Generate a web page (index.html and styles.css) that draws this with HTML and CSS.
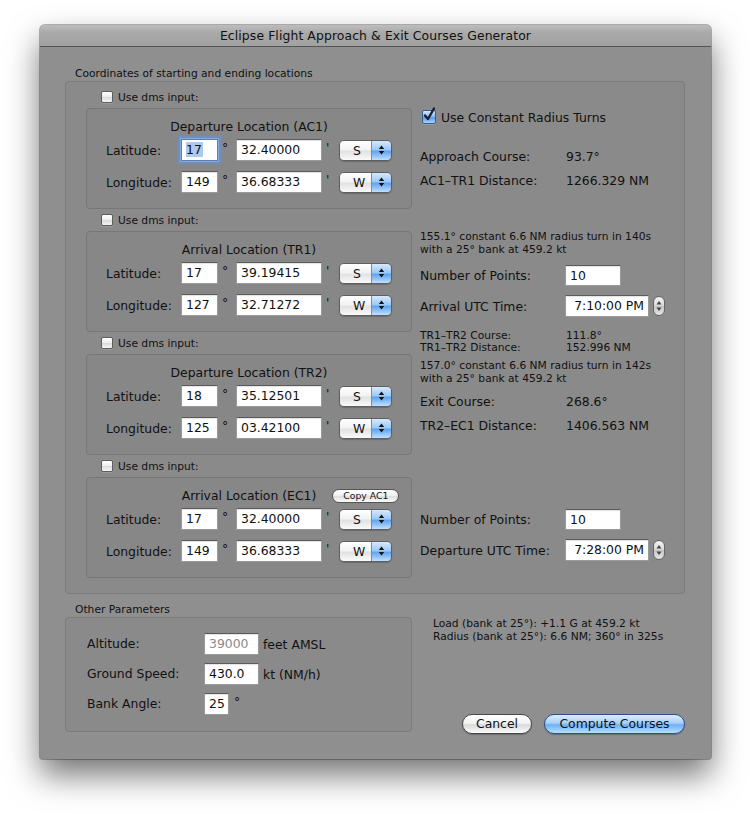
FILE: index.html
```html
<!DOCTYPE html>
<html lang="en">
<head>
<meta charset="utf-8">
<title>Eclipse Flight Approach &amp; Exit Courses Generator</title>
<link rel="stylesheet" href="styles.css">
</head>
<body>
<div class="window">
  <div class="titlebar">Eclipse Flight Approach &amp; Exit Courses Generator</div>
  <div class="content">
    <div class="group-label">Coordinates of starting and ending locations</div>
    <div class="groupbox coords">
      <div class="left-col">
        <div class="loc">
          <div class="dms"><span class="cb"></span><span>Use dms input:</span></div>
          <div class="locbox">
            <div class="loc-title"><span class="lt">Departure Location (AC1)</span></div>
            <div class="coord-row lat">
              <span class="lbl">Latitude:</span>
              <span class="field focus"><span class="sel">17</span></span>
              <span class="unit">°</span>
              <span class="field">32.40000</span>
              <span class="unit">'</span>
              <span class="popup"><span class="pv">S</span><span class="parr"><svg width="7" height="12" viewBox="0 0 7 12"><path d="M3.5 1.5L6.2 5H0.8Z M3.5 10.5L6.2 7H0.8Z" fill="#111"/></svg></span></span>
            </div>
            <div class="coord-row lon">
              <span class="lbl">Longitude:</span>
              <span class="field">149</span>
              <span class="unit">°</span>
              <span class="field">36.68333</span>
              <span class="unit">'</span>
              <span class="popup"><span class="pv">W</span><span class="parr"><svg width="7" height="12" viewBox="0 0 7 12"><path d="M3.5 1.5L6.2 5H0.8Z M3.5 10.5L6.2 7H0.8Z" fill="#111"/></svg></span></span>
            </div>
          </div>
        </div>
        <div class="loc">
          <div class="dms"><span class="cb"></span><span>Use dms input:</span></div>
          <div class="locbox">
            <div class="loc-title"><span class="lt">Arrival Location (TR1)</span></div>
            <div class="coord-row lat">
              <span class="lbl">Latitude:</span>
              <span class="field">17</span>
              <span class="unit">°</span>
              <span class="field">39.19415</span>
              <span class="unit">'</span>
              <span class="popup"><span class="pv">S</span><span class="parr"><svg width="7" height="12" viewBox="0 0 7 12"><path d="M3.5 1.5L6.2 5H0.8Z M3.5 10.5L6.2 7H0.8Z" fill="#111"/></svg></span></span>
            </div>
            <div class="coord-row lon">
              <span class="lbl">Longitude:</span>
              <span class="field">127</span>
              <span class="unit">°</span>
              <span class="field">32.71272</span>
              <span class="unit">'</span>
              <span class="popup"><span class="pv">W</span><span class="parr"><svg width="7" height="12" viewBox="0 0 7 12"><path d="M3.5 1.5L6.2 5H0.8Z M3.5 10.5L6.2 7H0.8Z" fill="#111"/></svg></span></span>
            </div>
          </div>
        </div>
        <div class="loc">
          <div class="dms"><span class="cb"></span><span>Use dms input:</span></div>
          <div class="locbox">
            <div class="loc-title"><span class="lt">Departure Location (TR2)</span></div>
            <div class="coord-row lat">
              <span class="lbl">Latitude:</span>
              <span class="field">18</span>
              <span class="unit">°</span>
              <span class="field">35.12501</span>
              <span class="unit">'</span>
              <span class="popup"><span class="pv">S</span><span class="parr"><svg width="7" height="12" viewBox="0 0 7 12"><path d="M3.5 1.5L6.2 5H0.8Z M3.5 10.5L6.2 7H0.8Z" fill="#111"/></svg></span></span>
            </div>
            <div class="coord-row lon">
              <span class="lbl">Longitude:</span>
              <span class="field">125</span>
              <span class="unit">°</span>
              <span class="field">03.42100</span>
              <span class="unit">'</span>
              <span class="popup"><span class="pv">W</span><span class="parr"><svg width="7" height="12" viewBox="0 0 7 12"><path d="M3.5 1.5L6.2 5H0.8Z M3.5 10.5L6.2 7H0.8Z" fill="#111"/></svg></span></span>
            </div>
          </div>
        </div>
        <div class="loc">
          <div class="dms"><span class="cb"></span><span>Use dms input:</span></div>
          <div class="locbox">
            <div class="loc-title"><span class="lt">Arrival Location (EC1)</span><span class="mini-btn">Copy AC1</span></div>
            <div class="coord-row lat">
              <span class="lbl">Latitude:</span>
              <span class="field">17</span>
              <span class="unit">°</span>
              <span class="field">32.40000</span>
              <span class="unit">'</span>
              <span class="popup"><span class="pv">S</span><span class="parr"><svg width="7" height="12" viewBox="0 0 7 12"><path d="M3.5 1.5L6.2 5H0.8Z M3.5 10.5L6.2 7H0.8Z" fill="#111"/></svg></span></span>
            </div>
            <div class="coord-row lon">
              <span class="lbl">Longitude:</span>
              <span class="field">149</span>
              <span class="unit">°</span>
              <span class="field">36.68333</span>
              <span class="unit">'</span>
              <span class="popup"><span class="pv">W</span><span class="parr"><svg width="7" height="12" viewBox="0 0 7 12"><path d="M3.5 1.5L6.2 5H0.8Z M3.5 10.5L6.2 7H0.8Z" fill="#111"/></svg></span></span>
            </div>
          </div>
        </div>
      </div>

      <div class="right-col">
        <div class="crt"><span class="cb checked"><svg width="14" height="16" viewBox="0 0 14 16"><path d="M3 8.5L6 12L12 1.5" fill="none" stroke="#1b1f3a" stroke-width="2.4" stroke-linecap="round" stroke-linejoin="round"/></svg></span><span>Use Constant Radius Turns</span></div>
        <div class="kv r-approach"><span>Approach Course:</span><span class="val">93.7°</span></div>
        <div class="kv r-dist1"><span>AC1–TR1 Distance:</span><span class="val">1266.329 NM</span></div>
        <div class="small-note r-turn1">155.1° constant 6.6 NM radius turn in 140s<br>with a 25° bank at 459.2 kt</div>
        <div class="frow r-np1"><span>Number of Points:</span><span class="field np">10</span></div>
        <div class="frow tall r-arr"><span>Arrival UTC Time:</span><span class="timebox"><span class="field time">7:10:00 PM</span><span class="stepper"><svg width="10" height="18" viewBox="0 0 10 18"><path d="M5 4L7.5 7.5H2.5Z M5 14L7.5 10.5H2.5Z" fill="#444"/></svg></span></span></div>
        <div class="small-kv r-tr"><span>TR1–TR2 Course:</span><span class="val">111.8°</span><span>TR1–TR2 Distance:</span><span class="val">152.996 NM</span></div>
        <div class="small-note r-turn2">157.0° constant 6.6 NM radius turn in 142s<br>with a 25° bank at 459.2 kt</div>
        <div class="kv r-exit"><span>Exit Course:</span><span class="val">268.6°</span></div>
        <div class="kv r-dist2"><span>TR2–EC1 Distance:</span><span class="val">1406.563 NM</span></div>
        <div class="frow r-np2"><span>Number of Points:</span><span class="field np">10</span></div>
        <div class="frow tall r-dep"><span>Departure UTC Time:</span><span class="timebox"><span class="field time">7:28:00 PM</span><span class="stepper"><svg width="10" height="18" viewBox="0 0 10 18"><path d="M5 4L7.5 7.5H2.5Z M5 14L7.5 10.5H2.5Z" fill="#444"/></svg></span></span></div>
      </div>
    </div>

    <div class="bottom">
      <div class="group-label">Other Parameters</div>
      <div class="groupbox params">
        <div class="prow"><span class="lbl">Altitude:</span><span class="field w55 disabled">39000</span><span class="punit">feet AMSL</span></div>
        <div class="prow"><span class="lbl">Ground Speed:</span><span class="field w55">430.0</span><span class="punit">kt (NM/h)</span></div>
        <div class="prow"><span class="lbl">Bank Angle:</span><span class="field w25">25</span><span class="punit deg">°</span></div>
      </div>
      <div class="side">
        <div class="small-note load">Load (bank at 25°): +1.1 G at 459.2 kt<br>Radius (bank at 25°): 6.6 NM; 360° in 325s</div>
        <div class="buttons">
          <span class="btn cancel">Cancel</span>
          <span class="btn default compute">Compute Courses</span>
        </div>
      </div>
    </div>
  </div>
</div>
</body>
</html>
```

FILE: styles.css
```css
* { box-sizing: border-box; }
html, body { margin: 0; padding: 0; background: #ffffff; }
body {
  width: 750px;
  height: 814px;
  overflow: hidden;
  font-family: "DejaVu Sans", "Liberation Sans", sans-serif;
  font-size: 12.4px;
  color: #111;
}

.window {
  margin: 25px 0 0 40px;
  width: 671px;
  height: 734px;
  background: #8f8f8f;
  border-radius: 5px 5px 3px 3px;
  box-shadow: 0 16px 32px rgba(0,0,0,0.55), 0 0 0 1px rgba(0,0,0,0.28);
  overflow: hidden;
}

.titlebar {
  height: 22px;
  line-height: 21px;
  text-align: center;
  background: linear-gradient(#bdbdbd, #a8a8a8 40%, #a2a2a2);
  border-bottom: 1px solid #555;
  color: #111;
  letter-spacing: 0.1px;
}

.content { padding: 20px 26px 27px 25px; }

.group-label {
  height: 14px;
  line-height: 14px;
  font-size: 10.7px;
  padding-left: 10px;
}

.groupbox {
  border: 1px solid #7b7b7b;
  border-radius: 4px;
  background: #8a8a8a;
}

.coords {
  display: flex;
  padding: 4px 0 15px 0;
}

.left-col { padding-left: 20px; width: 346px; }

.dms {
  height: 22px;
  display: flex;
  align-items: center;
  padding-left: 15px;
  gap: 5px;
  font-size: 10.7px;
}

.cb {
  display: inline-block;
  width: 12px;
  height: 12px;
  border: 1px solid #5e5e5e;
  border-radius: 2px;
  background: linear-gradient(#ffffff, #ececec 50%, #dcdcdc 55%, #f6f6f6);
  box-shadow: 0 1px 0 rgba(255,255,255,0.15);
}

.cb.checked {
  width: 14px;
  height: 14px;
  border-color: #3b5d93;
  background: linear-gradient(#d4e7fd, #8dbdf2 45%, #5c9be8 55%, #a9d3fd);
  display: flex;
  align-items: flex-end;
  justify-content: center;
  overflow: visible;
}
.cb.checked svg { flex: none; }

.locbox {
  height: 101px;
  border: 1px solid #777;
  border-radius: 4px;
  background: #878787;
}

.loc-title {
  display: grid;
  grid-template-columns: 1fr auto 1fr;
  align-items: center;
  height: 18px;
  margin-top: 9px;
  line-height: 18px;
}
.loc-title .lt { grid-column: 2; }

.mini-btn {
  grid-column: 3;
  justify-self: start;
  margin-left: 16px;
  width: 67px;
  height: 14px;
  line-height: 12px;
  border: 1px solid #555;
  border-radius: 7px;
  background: linear-gradient(#ffffff, #f2f2f2 45%, #dedede 55%, #fbfbfb);
  font-size: 9.3px;
  text-align: center;
}

.coord-row {
  display: grid;
  grid-template-columns: 75px 37px 18px 86px 17px 53px;
  align-items: center;
  height: 22px;
  padding-left: 19px;
}
.coord-row.lat { margin-top: 3px; }
.coord-row.lon { margin-top: 10px; }

.unit {
  align-self: start;
  line-height: 18px;
  padding-left: 4px;
}

.field {
  display: block;
  height: 22px;
  line-height: 20px;
  padding: 0 4px;
  background: #fff;
  border: 1px solid #9a9a9a;
  border-top-color: #5a5a5a;
  box-shadow: inset 0 1px 1px rgba(0,0,0,0.12);
  white-space: nowrap;
}
.field.focus {
  border-color: #5f7fae;
  box-shadow: 0 0 0 1px #86a9d9, 0 0 1px 3px rgba(104,146,206,0.75);
}
.sel {
  display: inline-block;
  background: #adc9ef;
  line-height: 15px;
  padding: 0 1px 0 0;
}
.field.disabled { color: #8a8a8a; }

.popup {
  display: flex;
  width: 53px;
  height: 21px;
  border: 1px solid #5f5f5f;
  border-radius: 5px;
  overflow: hidden;
  box-shadow: 0 1px 1px rgba(0,0,0,0.2);
}
.pv {
  flex: 1;
  padding-left: 13px;
  line-height: 19px;
  background: linear-gradient(#ffffff, #f3f3f3 45%, #e2e2e2 55%, #fafafa);
}
.parr {
  width: 20px;
  display: flex;
  align-items: center;
  justify-content: center;
  border-left: 1px solid #6c8fc2;
  background: linear-gradient(#d7e9fd, #9ccaf7 45%, #63a3ee 55%, #bfe1ff);
}

/* right column */
.right-col {
  margin-left: 8px;
  flex: 1;
  display: flex;
  flex-direction: column;
}
.crt {
  height: 18px;
  display: flex;
  align-items: center;
  gap: 5px;
  padding-left: 2px;
  margin-top: 22px;
}
.kv, .frow {
  display: grid;
  grid-template-columns: 145px auto;
  align-items: center;
}
.kv { height: 18px; line-height: 18px; }
.val { padding-left: 1px; }
.frow { height: 21px; }
.frow.tall { height: 22px; }

.small-note {
  font-size: 10.7px;
  line-height: 13px;
}
.small-kv {
  display: grid;
  grid-template-columns: 145px auto;
  font-size: 10.7px;
  line-height: 12px;
}

.r-approach { margin-top: 22px; }
.r-dist1 { margin-top: 6px; }
.r-turn1 { margin-top: 40px; }
.r-np1 { margin-top: 9px; }
.r-arr { margin-top: 9px; }
.r-tr { margin-top: 13px; }
.r-turn2 { margin-top: 5px; }
.r-exit { margin-top: 8px; }
.r-dist2 { margin-top: 6px; }
.r-np2 { margin-top: 74px; }
.r-dep { margin-top: 9px; }

.field.np { width: 56px; height: 21px; line-height: 19px; }
.timebox { display: flex; align-items: center; gap: 4px; }
.field.time { width: 84px; text-align: right; }
.stepper {
  width: 12px;
  height: 20px;
  border: 1px solid #666;
  border-radius: 6px;
  background: linear-gradient(#f4f4f4, #d8d8d8 50%, #c4c4c4 50%, #e6e6e6);
  display: flex;
  align-items: center;
  justify-content: center;
}

/* bottom */
.bottom {
  margin-top: 9px;
  display: grid;
  grid-template-columns: 347px 1fr;
  grid-template-rows: 14px 115px;
  column-gap: 20px;
}
.bottom .group-label { grid-column: 1 / 3; }

.params {
  display: flex;
  flex-direction: column;
  gap: 8px;
  padding: 15px 0 0 21px;
}
.prow {
  display: flex;
  align-items: center;
  height: 22px;
}
.prow .lbl { width: 117px; line-height: 22px; }
.field.w55 { width: 55px; }
.field.w25 { width: 25px; }
.punit { padding-left: 4px; }
.punit.deg { align-self: flex-start; line-height: 18px; padding-left: 5px; }

.side {
  display: flex;
  flex-direction: column;
  padding-left: 1px;
}
.buttons {
  margin-top: auto;
  margin-bottom: -2px;
  display: flex;
  justify-content: flex-end;
  gap: 12px;
}
.btn {
  display: block;
  height: 20px;
  line-height: 18px;
  border: 1px solid #4a4a4a;
  border-radius: 10px;
  text-align: center;
  background: linear-gradient(#ffffff, #f4f4f4 45%, #dadada 55%, #fbfbfb);
  box-shadow: 0 1px 1px rgba(0,0,0,0.25);
}
.btn.cancel { width: 70px; }
.btn.compute { width: 141px; }
.btn.default {
  border-color: #2d4f8c;
  background: linear-gradient(#dcecfe, #a9cff8 45%, #6db0f6 55%, #b7e0fd);
}
```
